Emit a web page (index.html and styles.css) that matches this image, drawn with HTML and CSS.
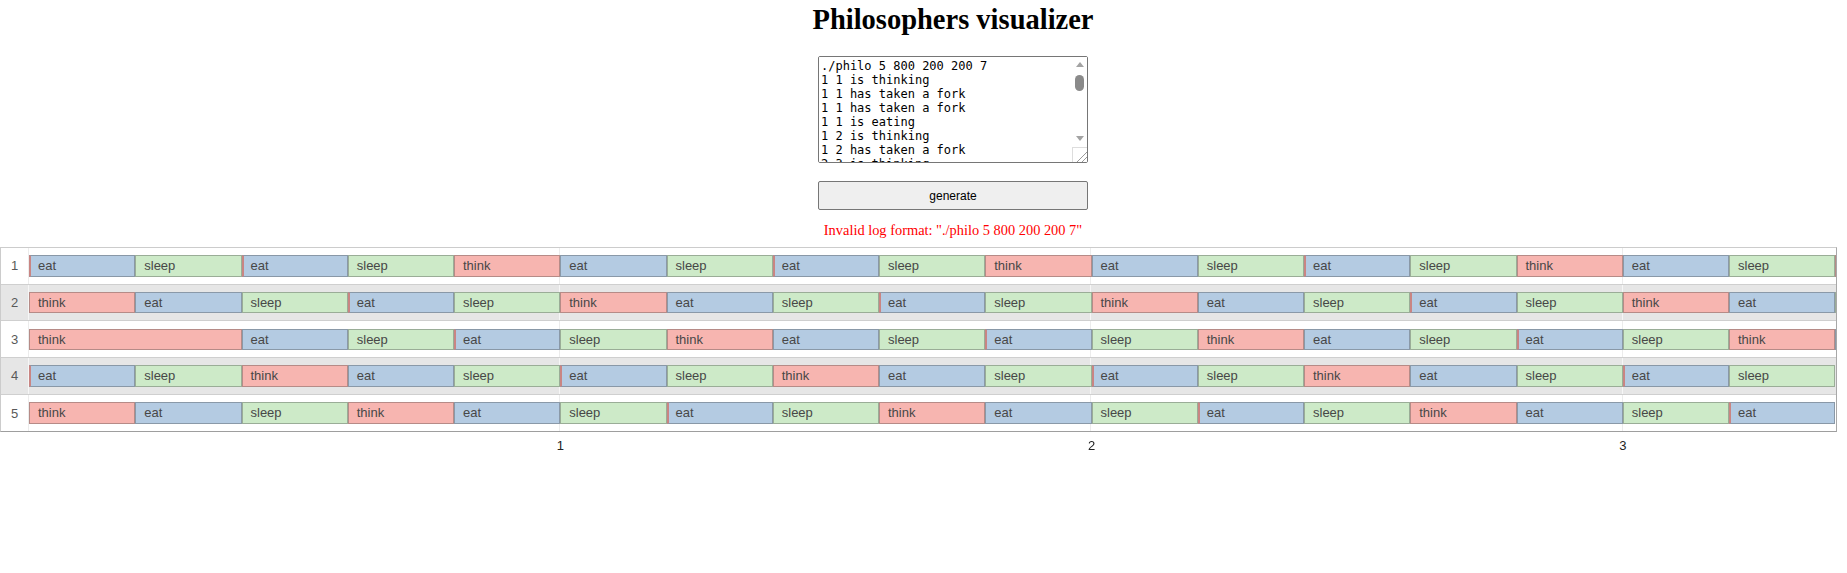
FILE: index.html
```html
<!DOCTYPE html>
<html lang="en">
<head>
<meta charset="utf-8">
<title>Philosophers visualizer</title>
<link rel="stylesheet" href="styles.css">
</head>
<body>
<div class="top">
  <h1 class="title">Philosophers visualizer</h1>
  <div class="logwrap">
  <textarea class="log" spellcheck="false">./philo 5 800 200 200 7
1 1 is thinking
1 1 has taken a fork
1 1 has taken a fork
1 1 is eating
1 2 is thinking
1 2 has taken a fork
2 3 is thinking
2 3 has taken a fork
2 3 has taken a fork
2 3 is eating
2 4 is thinking
2 5 is thinking
2 5 has taken a fork
201 1 is sleeping
201 5 has taken a fork
201 5 has taken a fork
201 5 is eating
202 2 has taken a fork
202 2 is eating
202 3 is sleeping
202 4 has taken a fork
401 1 is thinking
401 5 is sleeping
401 1 has taken a fork
402 2 is sleeping
402 4 has taken a fork
402 4 is eating
402 3 is thinking
402 3 has taken a fork
601 1 has taken a fork
601 1 is eating
602 4 is sleeping
602 3 has taken a fork
602 3 is eating
601 5 is thinking
602 2 is thinking
802 1 is sleeping
802 5 has taken a fork
802 5 has taken a fork
802 5 is eating</textarea>
  <div class="vscroll" aria-hidden="true">
    <svg class="arrow up" width="8" height="5" viewBox="0 0 8 5"><path d="M0 5 L4 0 L8 5 Z" fill="#a3a3a3"/></svg>
    <div class="thumb"></div>
    <svg class="arrow down" width="8" height="5" viewBox="0 0 8 5"><path d="M0 0 L8 0 L4 5 Z" fill="#a3a3a3"/></svg>
  </div>
  </div>
  <button class="gen" type="button">generate</button>
  <p class="error">Invalid log format: "./philo 5 800 200 200 7"</p>
</div>

<div class="chart">
  <div class="row">
    <div class="lbl">1</div>
    <div class="track">
      <div class="bar eat u1 lead">eat</div>
      <div class="bar sleep u1">sleep</div>
      <div class="bar eat u1 lead">eat</div>
      <div class="bar sleep u1">sleep</div>
      <div class="bar think u1">think</div>
      <div class="bar eat u1">eat</div>
      <div class="bar sleep u1">sleep</div>
      <div class="bar eat u1 lead">eat</div>
      <div class="bar sleep u1">sleep</div>
      <div class="bar think u1">think</div>
      <div class="bar eat u1">eat</div>
      <div class="bar sleep u1">sleep</div>
      <div class="bar eat u1 lead">eat</div>
      <div class="bar sleep u1">sleep</div>
      <div class="bar think u1">think</div>
      <div class="bar eat u1">eat</div>
      <div class="bar sleep u1">sleep</div>
      <div class="bar think end"></div>
    </div>
  </div>
  <div class="row alt">
    <div class="lbl">2</div>
    <div class="track">
      <div class="bar think u1">think</div>
      <div class="bar eat u1">eat</div>
      <div class="bar sleep u1">sleep</div>
      <div class="bar eat u1 lead">eat</div>
      <div class="bar sleep u1">sleep</div>
      <div class="bar think u1">think</div>
      <div class="bar eat u1">eat</div>
      <div class="bar sleep u1">sleep</div>
      <div class="bar eat u1 lead">eat</div>
      <div class="bar sleep u1">sleep</div>
      <div class="bar think u1">think</div>
      <div class="bar eat u1">eat</div>
      <div class="bar sleep u1">sleep</div>
      <div class="bar eat u1 lead">eat</div>
      <div class="bar sleep u1">sleep</div>
      <div class="bar think u1">think</div>
      <div class="bar eat u1">eat</div>
      <div class="bar sleep end"></div>
    </div>
  </div>
  <div class="row">
    <div class="lbl">3</div>
    <div class="track">
      <div class="bar think u2">think</div>
      <div class="bar eat u1">eat</div>
      <div class="bar sleep u1">sleep</div>
      <div class="bar eat u1 lead">eat</div>
      <div class="bar sleep u1">sleep</div>
      <div class="bar think u1">think</div>
      <div class="bar eat u1">eat</div>
      <div class="bar sleep u1">sleep</div>
      <div class="bar eat u1 lead">eat</div>
      <div class="bar sleep u1">sleep</div>
      <div class="bar think u1">think</div>
      <div class="bar eat u1">eat</div>
      <div class="bar sleep u1">sleep</div>
      <div class="bar eat u1 lead">eat</div>
      <div class="bar sleep u1">sleep</div>
      <div class="bar think u1">think</div>
      <div class="bar eat end"></div>
    </div>
  </div>
  <div class="row alt">
    <div class="lbl">4</div>
    <div class="track">
      <div class="bar eat u1 lead">eat</div>
      <div class="bar sleep u1">sleep</div>
      <div class="bar think u1">think</div>
      <div class="bar eat u1">eat</div>
      <div class="bar sleep u1">sleep</div>
      <div class="bar eat u1 lead">eat</div>
      <div class="bar sleep u1">sleep</div>
      <div class="bar think u1">think</div>
      <div class="bar eat u1">eat</div>
      <div class="bar sleep u1">sleep</div>
      <div class="bar eat u1 lead">eat</div>
      <div class="bar sleep u1">sleep</div>
      <div class="bar think u1">think</div>
      <div class="bar eat u1">eat</div>
      <div class="bar sleep u1">sleep</div>
      <div class="bar eat u1 lead">eat</div>
      <div class="bar sleep u1">sleep</div>
    </div>
  </div>
  <div class="row">
    <div class="lbl">5</div>
    <div class="track">
      <div class="bar think u1">think</div>
      <div class="bar eat u1">eat</div>
      <div class="bar sleep u1">sleep</div>
      <div class="bar think u1">think</div>
      <div class="bar eat u1">eat</div>
      <div class="bar sleep u1">sleep</div>
      <div class="bar eat u1 lead">eat</div>
      <div class="bar sleep u1">sleep</div>
      <div class="bar think u1">think</div>
      <div class="bar eat u1">eat</div>
      <div class="bar sleep u1">sleep</div>
      <div class="bar eat u1 lead">eat</div>
      <div class="bar sleep u1">sleep</div>
      <div class="bar think u1">think</div>
      <div class="bar eat u1">eat</div>
      <div class="bar sleep u1">sleep</div>
      <div class="bar eat u1 lead">eat</div>
    </div>
  </div>
</div>

<div class="axis">
  <div class="tick"><span>1</span></div>
  <div class="tick"><span>2</span></div>
  <div class="tick"><span>3</span></div>
</div>
</body>
</html>
```

FILE: styles.css
```css
html, body {
  margin: 0;
  padding: 0;
  background: #ffffff;
}

body {
  font-family: "Liberation Serif", "Times New Roman", serif;
  color: #000;
}

.top {
  display: flex;
  flex-direction: column;
  align-items: center;
  padding-top: 4px;
  padding-left: 59px;
}

.title {
  margin: 0;
  font-size: 28.5px;
  font-weight: bold;
  line-height: normal;
}

.logwrap {
  position: relative;
  width: 270px;
  height: 107px;
  margin-top: 20px;
}

.log {
  display: block;
  box-sizing: border-box;
  width: 270px;
  height: 107px;
  margin: 0;
  padding: 2px 17px 2px 2px;
  border: 1px solid #767676;
  border-radius: 2px;
  font-family: "DejaVu Sans Mono", monospace;
  font-size: 12px;
  line-height: normal;
  color: #000;
  resize: both;
  overflow-y: scroll;
}

.log::-webkit-resizer {
  background-color: #ffffff;
  border-left: 1px solid #dddddd;
  border-top: 1px solid #dddddd;
  background-image: linear-gradient(135deg, transparent 62%, #9a9a9a 62%, #9a9a9a 67%, transparent 67%, transparent 80%, #9a9a9a 80%, #9a9a9a 85%, transparent 85%);
}

.vscroll {
  position: absolute;
  top: 1px;
  right: 1px;
  width: 15px;
  height: 90px;
  background: #ffffff;
  pointer-events: none;
}

.arrow {
  position: absolute;
  left: 4px;
  display: block;
}

.arrow.up {
  top: 5px;
}

.arrow.down {
  top: 79px;
}

.thumb {
  position: absolute;
  left: 3px;
  top: 18px;
  width: 9px;
  height: 16px;
  border-radius: 5px;
  background: #8a8a8a;
}

.gen {
  box-sizing: border-box;
  width: 270px;
  height: 29px;
  margin-top: 18px;
  border: 1px solid #767676;
  border-radius: 2px;
  background: #efefef;
  font-family: "Liberation Sans", Arial, sans-serif;
  font-size: 12px;
  color: #000;
}

.error {
  margin: 12px 0 0 0;
  font-size: 14.4px;
  line-height: normal;
  color: #ff0000;
}

.chart {
  box-sizing: border-box;
  width: 1837px;
  margin-top: 8px;
  border-top: 1px solid #cccccc;
  border-left: 1px solid #cccccc;
  border-right: 1px solid #a8a8a8;
  border-bottom: 1px solid #9e9e9e;
  font-family: "Liberation Sans", Arial, sans-serif;
}

.row {
  --grid: #ececec;
  box-sizing: border-box;
  display: flex;
  height: 36.7px;
  border-bottom: 1px solid #cfcfcf;
  background: #ffffff;
}

.row:last-child {
  border-bottom: none;
}

.row.alt {
  --grid: #f6f6f6;
  background: #e6e6e6;
}

.lbl {
  box-sizing: border-box;
  flex: none;
  width: 28px;
  border-right: 1px solid var(--grid);
  display: flex;
  align-items: center;
  justify-content: center;
  font-size: 13px;
  color: #595959;
}

.track {
  flex: 1;
  min-width: 0;
  display: flex;
  align-items: center;
  overflow: hidden;
  background-image: repeating-linear-gradient(to right, transparent 0 530.25px, var(--grid) 530.25px 531.25px);
}

.bar {
  box-sizing: border-box;
  flex: none;
  height: 21.4px;
  padding-left: 8px;
  border: 1px solid rgba(60, 60, 60, 0.35);
  font-size: 13px;
  line-height: 19.4px;
  color: #474747;
  white-space: nowrap;
  overflow: hidden;
}

.u1 { width: 106.25px; }
.u2 { width: 212.5px; }
.end { width: 2px; padding: 0; }

.eat { background: #b4cbe2; }
.sleep { background: #cdeac8; }
.think { background: #f7b5b0; }

.lead {
  border-left: 2px solid #c98583;
  padding-left: 7px;
}

.axis {
  display: flex;
  padding-left: 29px;
  margin-top: 6px;
  font-family: "Liberation Sans", Arial, sans-serif;
  font-size: 13px;
  color: #222222;
}

.tick {
  flex: none;
  width: 531.25px;
  text-align: right;
}

.tick span {
  display: inline-block;
  transform: translateX(50%);
}
```
